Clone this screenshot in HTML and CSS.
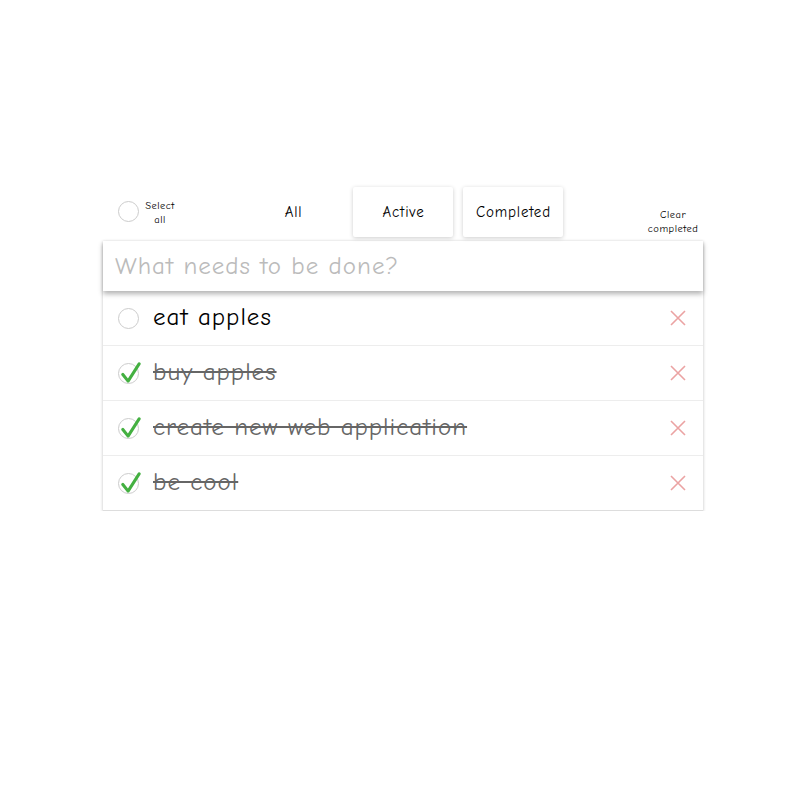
FILE: index.html
```html
<!DOCTYPE html>
<html>
<head>
<meta charset="utf-8">
<link rel="stylesheet" href="styles.css">
</head>
<body>
<div class="app">
  <div class="toolbar">
    <div class="select-all">
      <span class="circle"></span>
      <span class="small-label">Select<br>all</span>
    </div>
    <div class="filters">
      <button class="filter plain">All</button>
      <button class="filter">Active</button>
      <button class="filter">Completed</button>
    </div>
    <div class="clear small-label">Clear<br>completed</div>
  </div>
  <div class="list">
    <div class="new-todo">What needs to be done?</div>
    <div class="item">
      <span class="circle"></span>
      <span class="text">eat apples</span>
      <svg class="del" viewBox="0 0 16 16"><path d="M1 1 L15 15 M15 1 L1 15" stroke="#eba3a3" stroke-width="1.6" fill="none"/></svg>
    </div>
    <div class="item done">
      <span class="circle"><svg viewBox="0 0 24 24" class="check"><path d="M4 13 L9.5 20 L21 2" fill="none" stroke="#44b041" stroke-width="3.2" stroke-linecap="round" stroke-linejoin="round"/></svg></span>
      <span class="text">buy apples</span>
      <svg class="del" viewBox="0 0 16 16"><path d="M1 1 L15 15 M15 1 L1 15" stroke="#eba3a3" stroke-width="1.6" fill="none"/></svg>
    </div>
    <div class="item done">
      <span class="circle"><svg viewBox="0 0 24 24" class="check"><path d="M4 13 L9.5 20 L21 2" fill="none" stroke="#44b041" stroke-width="3.2" stroke-linecap="round" stroke-linejoin="round"/></svg></span>
      <span class="text">create new web application</span>
      <svg class="del" viewBox="0 0 16 16"><path d="M1 1 L15 15 M15 1 L1 15" stroke="#eba3a3" stroke-width="1.6" fill="none"/></svg>
    </div>
    <div class="item done">
      <span class="circle"><svg viewBox="0 0 24 24" class="check"><path d="M4 13 L9.5 20 L21 2" fill="none" stroke="#44b041" stroke-width="3.2" stroke-linecap="round" stroke-linejoin="round"/></svg></span>
      <span class="text">be cool</span>
      <svg class="del" viewBox="0 0 16 16"><path d="M1 1 L15 15 M15 1 L1 15" stroke="#eba3a3" stroke-width="1.6" fill="none"/></svg>
    </div>
  </div>
</div>
</body>
</html>
```
FILE: styles.css
```css
* { box-sizing: border-box; }
body {
  margin: 0;
  background: #fff;
  font-family: "Comic Sans MS", "Comic Neue", cursive, "DejaVu Sans", sans-serif;
  color: #000;
}
.app {
  width: 600px;
  margin: 186px 0 0 103px;
}
.toolbar {
  display: flex;
  align-items: center;
  height: 51px;
  margin-bottom: 4px;
}
.select-all {
  display: flex;
  align-items: center;
  width: 140px;
  padding-left: 15px;
  gap: 3px;
}
.small-label {
  font-size: 10.5px;
  line-height: 14px;
  letter-spacing: 0.5px;
  text-align: center;
}
.select-all .small-label { width: 36px; margin-top: 3px; }
.filters {
  display: flex;
  gap: 10px;
}
.filter {
  width: 100px;
  height: 50px;
  border: none;
  background: #fff;
  font-family: inherit;
  font-size: 15px;
  letter-spacing: 0.8px;
  color: #000;
  border-radius: 2px;
  box-shadow: 0 1px 4px rgba(0,0,0,0.2);
  padding: 0 0 0 1px;
}
.filter.plain { box-shadow: none; }
.clear {
  margin-left: auto;
  width: 64px;
  margin-right: -2px;
  margin-top: 20px;
}
.circle {
  display: block;
  position: relative;
  width: 21px;
  height: 21px;
  border: 1px solid #ccc;
  border-radius: 50%;
  flex: none;
}
.list {
  background: #fff;
  box-shadow: 0 1px 3px rgba(0,0,0,0.25);
}
.new-todo {
  height: 50px;
  padding: 0 12px;
  font-size: 25px;
  letter-spacing: 1px;
  line-height: 50px;
  color: #bbb;
  box-shadow: 0 3px 5px rgba(0,0,0,0.3);
  position: relative;
}
.item {
  display: flex;
  align-items: center;
  height: 55px;
  padding: 0 15px;
  border-bottom: 1px solid #ededed;
}
.item:last-child { border-bottom-color: #ddd; }
.item .text {
  margin-left: 14px;
  margin-top: -4px;
  font-size: 25px;
  letter-spacing: 1px;
  flex: 1;
}
.item.done .text {
  color: #666;
  text-decoration: line-through;
}
.check {
  position: absolute;
  left: 0;
  top: -2px;
  width: 23px;
  height: 23px;
}
.del {
  width: 16px;
  height: 16px;
  margin-right: 2px;
  flex: none;
}
```
